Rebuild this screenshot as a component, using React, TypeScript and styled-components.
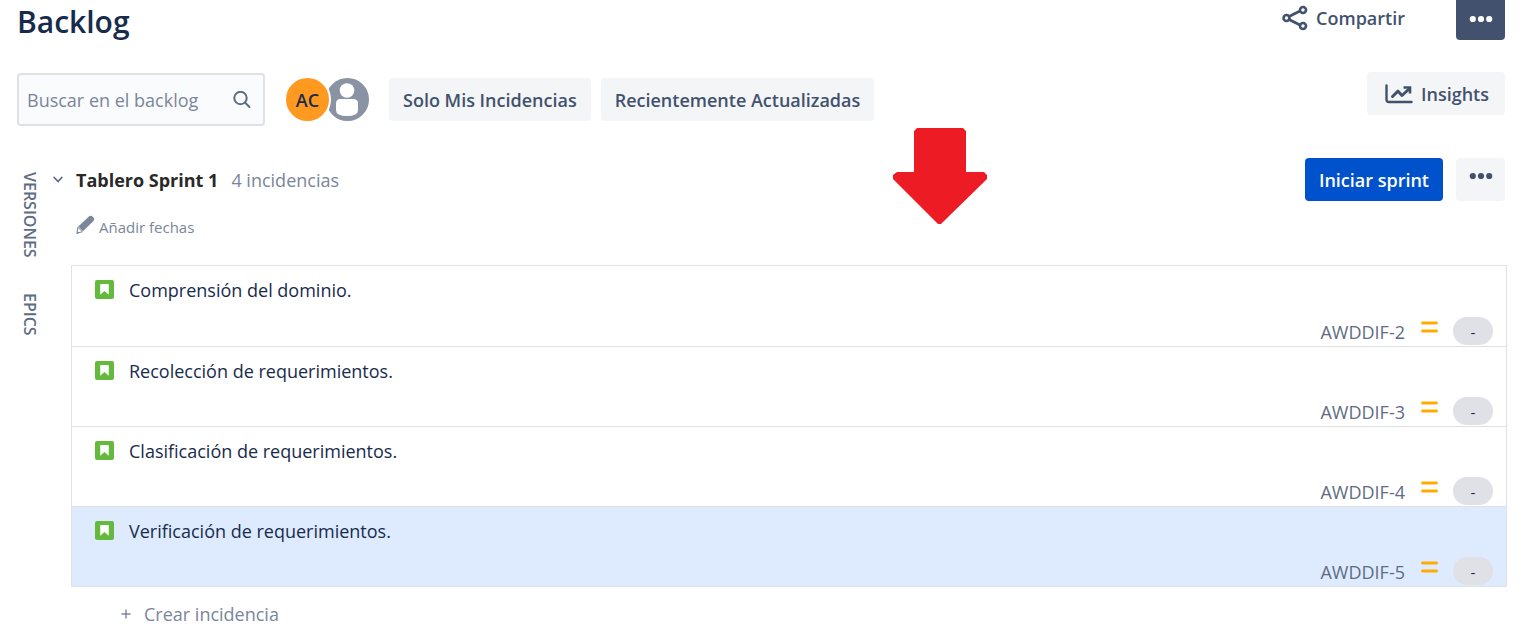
import React from "react";
import styled, { createGlobalStyle } from "styled-components";

const GlobalStyle = createGlobalStyle`
  *, *::before, *::after { box-sizing: border-box; }
  body {
    margin: 0;
    background: #ffffff;
    color: #172b4d;
    font-family: "Segoe UI", "Open Sans", "Noto Sans", sans-serif;
    font-size: 18px;
    line-height: 24px;
  }
  button, input { font: inherit; color: inherit; }
  h1, h2, p, ul { margin: 0; padding: 0; }
`;

const Page = styled.main`
  position: relative;
  padding: 0 24px 0 17px;
`;

const Header = styled.header`
  display: flex;
  justify-content: space-between;
  align-items: flex-start;
  height: 72px;
  padding: 0 2px 0 0;
`;

const PageTitle = styled.h1`
  padding-top: 2px;
  font-size: 30px;
  line-height: 40px;
  font-weight: 600;
`;

const HeaderActions = styled.div`
  display: flex;
  align-items: flex-start;
  gap: 37px;
`;

const Button = styled.button<{ $kind?: "subtle" | "plain" | "primary" | "dark" }>`
  display: inline-flex;
  align-items: center;
  justify-content: center;
  gap: 8px;
  height: 43px;
  padding: 0 14px;
  border: 0;
  border-radius: 4px;
  font-weight: 550;
  white-space: nowrap;
  cursor: pointer;
  color: ${({ $kind }) => ($kind === "primary" || $kind === "dark" ? "#ffffff" : "#42526e")};
  background: ${({ $kind }) =>
    $kind === "primary" ? "#0052cc" : $kind === "dark" ? "#42526e" : $kind === "plain" ? "transparent" : "#f4f5f7"};
`;

const ShareButton = styled(Button)`
  height: 36px;
`;

const InsightsButton = styled(Button)`
  padding: 0 16px 0 18px;
`;

const MoreButton = styled(Button)`
  width: 49px;
  padding: 0;
`;

const HeaderMore = styled(MoreButton)`
  height: 40px;
  padding-bottom: 2px;
  border-radius: 0 0 4px 4px;
`;

const SprintMore = styled(MoreButton)`
  padding-bottom: 8px;
`;

const Toolbar = styled.div`
  display: flex;
  align-items: flex-start;
  justify-content: space-between;
  padding-right: 2px;
`;

const Filters = styled.div`
  display: flex;
  align-items: center;
  padding-top: 1px;
`;

const SearchBox = styled.label`
  display: flex;
  align-items: center;
  width: 248px;
  height: 53px;
  padding: 0 12px 0 8px;
  border: 2px solid #dfe1e6;
  border-radius: 4px;
  background: #fafbfc;
  color: #5e6c84;
`;

const SearchInput = styled.input`
  flex: 1;
  min-width: 0;
  padding: 0;
  border: 0;
  outline: 0;
  background: transparent;
  &::placeholder { color: #7a869a; opacity: 1; }
`;

const Avatars = styled.div`
  display: flex;
  margin: 0 20px 0 19px;
`;

const Avatar = styled.button`
  display: flex;
  align-items: center;
  justify-content: center;
  width: 47px;
  height: 47px;
  padding: 0;
  border: 2px solid #ffffff;
  border-radius: 50%;
  background: #ff991f;
  color: #172b4d;
  font-weight: 600;
  z-index: 1;
`;

const EmptyAvatar = styled(Avatar)`
  margin: 0 -2px 0 -7px;
  background: #8993a4;
  z-index: 0;
`;

const FilterButtons = styled.div`
  display: flex;
  gap: 10px;
`;

const Body = styled.div`
  display: flex;
  padding-top: 32px;
`;

const SideTabs = styled.nav`
  display: flex;
  flex-direction: column;
  align-items: center;
  gap: 35px;
  width: 25px;
  padding-top: 14px;
`;

const SideTab = styled.button`
  padding: 0;
  border: 0;
  background: none;
  color: #5e6c84;
  font-size: 16px;
  line-height: 20px;
  font-weight: 550;
  writing-mode: vertical-rl;
`;

const Sprint = styled.section`
  flex: 1;
  min-width: 0;
  padding-left: 29px;
`;

const SprintHeader = styled.div`
  display: flex;
  align-items: flex-start;
  justify-content: space-between;
  padding-right: 2px;
`;

const SprintHeading = styled.div`
  display: flex;
  align-items: center;
  height: 43px;
  margin-left: -18px;
`;

const Toggle = styled.button`
  display: flex;
  padding: 0;
  border: 0;
  margin-right: 13px;
  background: none;
  color: #5e6c84;
`;

const SprintName = styled.h2`
  color: #292929;
  font-size: 18px;
  line-height: 24px;
  font-weight: 700;
`;

const IssueCount = styled.span`
  margin-left: 13px;
  color: #7a869a;
`;

const SprintActions = styled.div`
  display: flex;
  gap: 13px;
`;

const AddDates = styled.button`
  display: flex;
  align-items: center;
  gap: 4px;
  margin: 14px 0 26px 5px;
  padding: 0;
  border: 0;
  background: none;
  color: #7a869a;
  font-size: 15px;
`;

const IssueList = styled.ul`
  list-style: none;
  border: 1px solid #dfe1e6;
`;

const Issue = styled.li<{ $selected?: boolean }>`
  display: flex;
  flex-direction: column;
  justify-content: space-between;
  height: 80px;
  padding: 12px 13px 1px 23px;
  background: ${({ $selected }) => ($selected ? "#deebff" : "#ffffff")};
  & + & { border-top: 1px solid #dfe1e6; }
`;

const IssueSummary = styled.div`
  display: flex;
  align-items: flex-start;
  gap: 15px;
  & > svg { margin-top: 2px; }
`;

const IssueMeta = styled.div`
  display: flex;
  align-items: center;
  justify-content: flex-end;
  height: 29px;
`;

const IssueKey = styled.a`
  color: #5e6c84;
  text-decoration: none;
  padding-top: 2px;
`;

const Estimate = styled.span`
  width: 40px;
  height: 28px;
  margin-left: 15px;
  border-radius: 14px;
  background: #dfe1e6;
  color: #172b4d;
  font-size: 15px;
  line-height: 30px;
  text-align: center;
`;

const PriorityMark = styled.svg`
  margin: 0 0 8px 16px;
`;

const CreateIssue = styled.button`
  display: flex;
  align-items: center;
  gap: 13px;
  margin: 15px 0 4px 50px;
  padding: 0;
  border: 0;
  background: none;
  color: #7a869a;
`;

const RedArrow = styled.svg`
  position: absolute;
  top: 128px;
  left: 893px;
`;

const Dots = () => (
  <svg width="24" height="8" viewBox="0 0 24 8" fill="currentColor" aria-hidden="true">
    <circle cx="3.8" cy="4" r="3.1" />
    <circle cx="12" cy="4" r="3.1" />
    <circle cx="20.2" cy="4" r="3.1" />
  </svg>
);

const ShareIcon = () => (
  <svg width="26" height="26" viewBox="0 0 26 26" fill="none" stroke="currentColor" strokeWidth="2.6" aria-hidden="true">
    <path d="M7 11.5 18 6M7 14.5 18 20" />
    <circle cx="4.5" cy="13" r="3" />
    <circle cx="21" cy="5" r="3" />
    <circle cx="21" cy="21" r="3" />
  </svg>
);

const InsightsIcon = () => (
  <svg width="28" height="20" viewBox="0 0 28 20" fill="none" stroke="currentColor" strokeLinecap="round" strokeLinejoin="round" aria-hidden="true">
    <path d="M1.5 1.5V15.5Q1.5 18 4 18H26.5" strokeWidth="2.4" />
    <path d="M7.5 12.5 13 7.2 17 11.5 24 5" strokeWidth="3" />
    <path d="M18.5 3.5H25V9.5" strokeWidth="2.6" strokeLinecap="butt" strokeLinejoin="miter" />
  </svg>
);

const SearchIcon = () => (
  <svg width="18" height="18" viewBox="0 0 18 18" fill="none" stroke="currentColor" strokeWidth="2" strokeLinecap="round" aria-hidden="true">
    <circle cx="7.5" cy="7" r="6.2" />
    <path d="m12.2 11.7 4.300 4.300" />
  </svg>
);

const PersonIcon = () => (
  <svg width="43" height="43" viewBox="0 0 43 43" fill="#ffffff" aria-hidden="true">
    <circle cx="21" cy="12.5" r="7.3" />
    <path d="M10 25.500Q10 21 14.500 21H27.500Q32 21 32 25.500V32Q32 38 21 38T10 32Z" />
  </svg>
);

const ChevronIcon = () => (
  <svg width="10" height="8" viewBox="0 0 10 8" fill="none" stroke="currentColor" strokeWidth="1.8" strokeLinecap="round" strokeLinejoin="round" aria-hidden="true">
    <path d="m1.200 1.500 3.800 4 3.800-4" />
  </svg>
);

const PencilIcon = () => (
  <svg width="19" height="24" viewBox="0 0 19 24" fill="currentColor" aria-hidden="true">
    <path d="M12.4 2Q14.500-.2 16.800 1.800 19.200 4.100 17.200 6.300L7 16.200 2.300 11.600Z" />
    <path d="M1.800 12.200 6.400 16.700 1 18.300Z" fill="none" stroke="currentColor" strokeWidth="1" />
    <path d="m.4 18.900 1-3 2 2Z" />
  </svg>
);

const StoryIcon = () => (
  <svg width="19" height="19" viewBox="0 0 19 19" role="img" aria-label="Historia">
    <rect width="19" height="19" rx="2" fill="#63ba3c" />
    <path d="M6 4H13Q13.800 4 13.800 4.800V14.800L9.500 10.900 5.200 14.800V4.800Q5.200 4 6 4Z" fill="#ffffff" />
  </svg>
);

const Priority = () => (
  <PriorityMark width="17" height="12" viewBox="0 0 17 12" stroke="#ffab00" strokeWidth="2.8" strokeLinecap="round" role="img" aria-label="Prioridad media">
    <path d="M1.500 2H15.500M1.500 10H15.500" />
  </PriorityMark>
);

const PlusIcon = () => (
  <svg width="10" height="10" viewBox="0 0 10 10" stroke="currentColor" strokeWidth="1.4" aria-hidden="true">
    <path d="M5 .5V9.500M.5 5H9.500" />
  </svg>
);

const issues = [
  { key: "AWDDIF-2", summary: "Comprensión del dominio." },
  { key: "AWDDIF-3", summary: "Recolección de requerimientos." },
  { key: "AWDDIF-4", summary: "Clasificación de requerimientos." },
  { key: "AWDDIF-5", summary: "Verificación de requerimientos.", selected: true },
];

export default function App() {
  return (
    <>
      <GlobalStyle />
      <Page>
        <Header>
          <PageTitle>Backlog</PageTitle>
          <HeaderActions>
            <ShareButton $kind="plain">
              <ShareIcon />
              Compartir
            </ShareButton>
            <HeaderMore $kind="dark" aria-label="Más acciones">
              <Dots />
            </HeaderMore>
          </HeaderActions>
        </Header>

        <Toolbar>
          <Filters>
            <SearchBox>
              <SearchInput type="text" placeholder="Buscar en el backlog" aria-label="Buscar en el backlog" />
              <SearchIcon />
            </SearchBox>
            <Avatars>
              <Avatar>AC</Avatar>
              <EmptyAvatar aria-label="Sin asignar">
                <PersonIcon />
              </EmptyAvatar>
            </Avatars>
            <FilterButtons>
              <Button>Solo Mis Incidencias</Button>
              <Button>Recientemente Actualizadas</Button>
            </FilterButtons>
          </Filters>
          <InsightsButton>
            <InsightsIcon />
            Insights
          </InsightsButton>
        </Toolbar>

        <Body>
          <SideTabs>
            <SideTab>VERSIONES</SideTab>
            <SideTab>EPICS</SideTab>
          </SideTabs>
          <Sprint>
            <SprintHeader>
              <SprintHeading>
                <Toggle aria-label="Contraer sprint">
                  <ChevronIcon />
                </Toggle>
                <SprintName>Tablero Sprint 1</SprintName>
                <IssueCount>4 incidencias</IssueCount>
              </SprintHeading>
              <SprintActions>
                <Button $kind="primary">Iniciar sprint</Button>
                <SprintMore aria-label="Acciones del sprint">
                  <Dots />
                </SprintMore>
              </SprintActions>
            </SprintHeader>
            <AddDates>
              <PencilIcon />
              Añadir fechas
            </AddDates>
            <IssueList>
              {issues.map((issue) => (
                <Issue key={issue.key} $selected={issue.selected}>
                  <IssueSummary>
                    <StoryIcon />
                    <p>{issue.summary}</p>
                  </IssueSummary>
                  <IssueMeta>
                    <IssueKey href={`#${issue.key}`}>{issue.key}</IssueKey>
                    <Priority />
                    <Estimate>-</Estimate>
                  </IssueMeta>
                </Issue>
              ))}
            </IssueList>
            <CreateIssue>
              <PlusIcon />
              Crear incidencia
            </CreateIssue>
          </Sprint>
        </Body>

        <RedArrow width="95" height="97" viewBox="0 0 95 97" fill="#ed1c24" aria-hidden="true">
          <path d="M24 0H70L73 3V44H91L94 47V51L50 94L48 96H45L43 94L0 51V47L4 44H21V3Z" />
        </RedArrow>
      </Page>
    </>
  );
}
